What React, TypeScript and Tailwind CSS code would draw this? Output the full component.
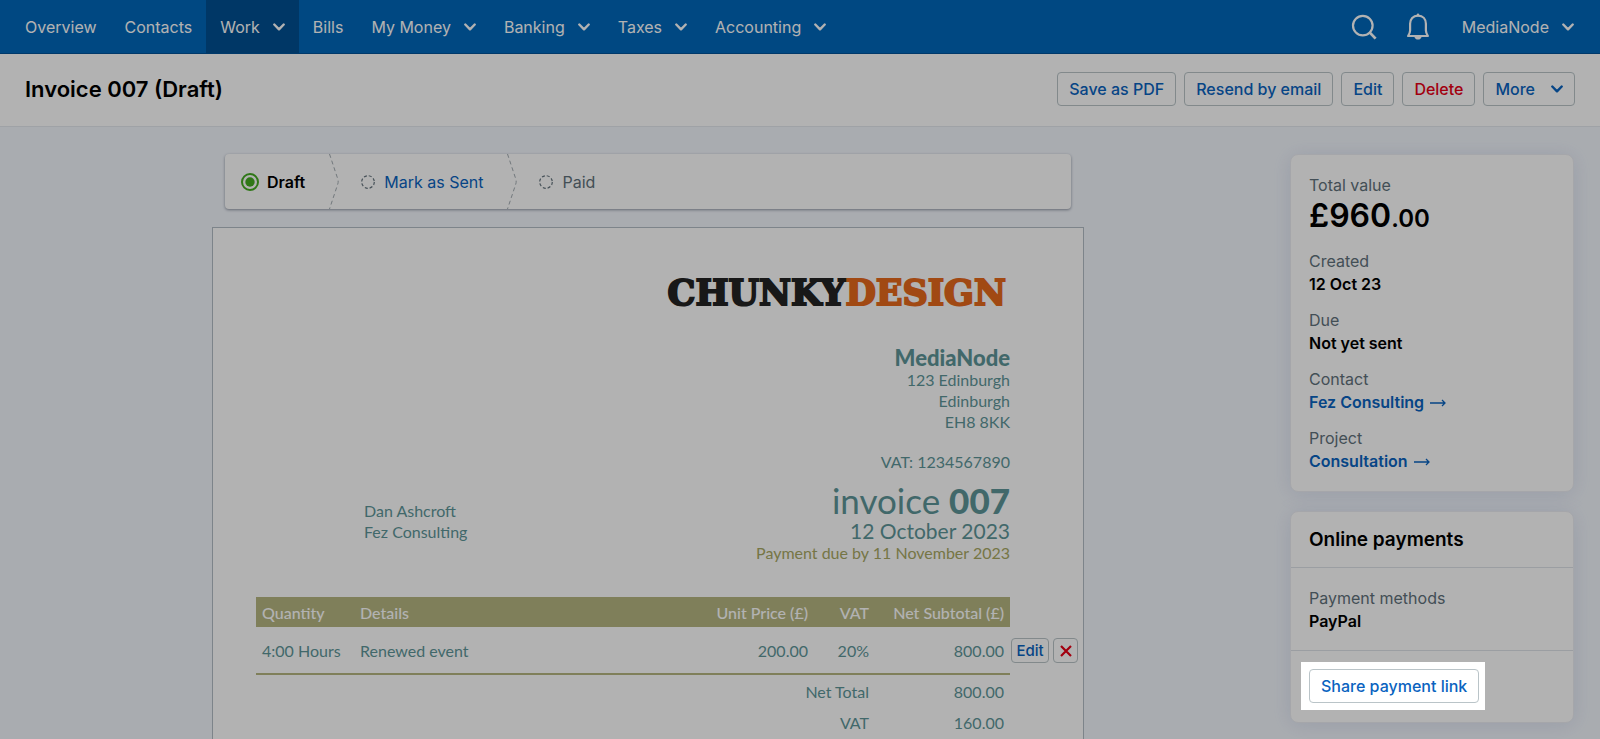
import { ReactNode } from 'react';

interface NavItem {
  label: string;
  hasMenu?: boolean;
  active?: boolean;
}

const navItems: NavItem[] = [
  { label: 'Overview' },
  { label: 'Contacts' },
  { label: 'Work', hasMenu: true, active: true },
  { label: 'Bills' },
  { label: 'My Money', hasMenu: true },
  { label: 'Banking', hasMenu: true },
  { label: 'Taxes', hasMenu: true },
  { label: 'Accounting', hasMenu: true },
];

function Chevron() {
  return (
    <svg className="h-2 w-3" viewBox="0 0 12 8" fill="none" stroke="currentColor" strokeWidth={2.4}>
      <path strokeLinecap="round" strokeLinejoin="round" d="M1.3 1.5L6 6.3l4.7-4.8" />
    </svg>
  );
}

function SearchIcon() {
  return (
    <svg className="h-7 w-7" viewBox="0 0 28 28" fill="none" stroke="currentColor" strokeWidth={2.2}>
      <circle cx="12.8" cy="12.6" r="9.8" />
      <path strokeWidth={2.8} d="M19.6 19.4l6 6.2" />
    </svg>
  );
}

function BellIcon() {
  return (
    <svg className="h-7 w-7" viewBox="0 0 28 28" fill="none" stroke="currentColor" strokeWidth={2.2}>
      <path
        strokeLinejoin="round"
        d="M14 2.6c-5 0-7.9 3.4-7.9 8.2v6.6c0 2-.9 3.8-2 5.6h19.8c-1.1-1.8-2-3.6-2-5.6v-6.6c0-4.800-2.900-8.200-7.900-8.200z"
      />
      <path strokeWidth={2.4} strokeLinecap="round" d="M14 1.6v.6" />
      <path fill="currentColor" stroke="none" d="M10.4 24h7.2c-.6 1.7-1.900 2.600-3.600 2.600s-3-.9-3.600-2.600z" />
    </svg>
  );
}

function StepDivider() {
  return (
    <svg className="h-[55px] w-[10px]" viewBox="0 0 10 55" fill="none" stroke="#a3acb2" strokeWidth={1}>
      <path strokeDasharray="4 3" d="M0.5 0L8.8 25q.8 2.5 0 5L0.5 55" />
    </svg>
  );
}

function PendingIcon() {
  return (
    <svg className="h-[14px] w-[14px]" viewBox="0 0 14 14" fill="none" stroke="#66757f" strokeWidth={1.2}>
      <circle cx="7" cy="7" r="6.3" strokeDasharray="3 1.95" />
    </svg>
  );
}

function ArrowIcon() {
  return (
    <svg className="mt-px h-2 w-4" viewBox="0 0 16 8" fill="none" stroke="currentColor" strokeWidth={1.3}>
      <path d="M0 4h15M12 1l3 3-3 3" />
    </svg>
  );
}

function Button({ children, danger }: { children: ReactNode; danger?: boolean }) {
  return (
    <button
      type="button"
      className={`flex h-[34px] items-center gap-4 whitespace-nowrap rounded border border-[#bac4c8] bg-white px-[11px] text-base font-medium ${
        danger ? 'text-[#e80016]' : 'text-[#0a63c0]'
      }`}
    >
      {children}
    </button>
  );
}

function Field({ label, children }: { label: string; children: ReactNode }) {
  return (
    <div className="leading-[23px]">
      <dt className="text-[#61717b]">{label}</dt>
      <dd className="font-semibold">{children}</dd>
    </div>
  );
}

function TopNav() {
  return (
    <nav className="flex h-[54px] items-stretch justify-between border-b border-[#005299] bg-[#0067bb] pl-[11px] pr-3 text-base text-white">
      <div className="flex">
        {navItems.map((item) => (
          <a
            key={item.label}
            href="#"
            className={`flex items-center gap-[13px] px-[14px] pt-px ${item.active ? 'bg-[#004f93]' : ''}`}
          >
            {item.label}
            {item.hasMenu && <Chevron />}
          </a>
        ))}
      </div>
      <div className="flex items-center">
        <button type="button" aria-label="Search">
          <SearchIcon />
        </button>
        <button type="button" aria-label="Notifications" className="ml-[26px]">
          <BellIcon />
        </button>
        <a href="#" className="ml-4 flex items-center gap-[13px] px-[14px] pt-px">
          MediaNode
          <Chevron />
        </a>
      </div>
    </nav>
  );
}

function StatusSteps() {
  return (
    <div className="mx-[13px] flex h-[55px] items-center rounded bg-white text-base shadow-[0_1px_3px_rgba(60,70,90,0.55)]">
      <svg className="ml-4 h-[18px] w-[18px]" viewBox="0 0 18 18" fill="none">
        <circle cx="9" cy="9" r="8" stroke="#44ab22" strokeWidth={2} />
        <circle cx="9" cy="9" r="4.7" fill="#44ab22" />
      </svg>
      <span className="ml-2 mr-6 font-semibold">Draft</span>
      <StepDivider />
      <span className="ml-[22px]">
        <PendingIcon />
      </span>
      <button type="button" className="ml-[9px] mr-6 text-[#0a63c0]">
        Mark as Sent
      </button>
      <StepDivider />
      <span className="ml-[22px]">
        <PendingIcon />
      </span>
      <span className="ml-[9px] text-[#61717b]">Paid</span>
    </div>
  );
}

function InvoicePaper() {
  return (
    <article className="mt-[18px] flex-1 border border-b-0 border-[#b4bec6] bg-white pl-[43px] pr-[5px] pt-[45px] font-[Lato,sans-serif] text-base leading-[21px] text-[#5e9699]">
      <div className="pr-[68px] text-right">
        <div className="pr-1 font-['DejaVu_Serif',serif] text-[35px] font-bold leading-10 text-[#232323] [-webkit-text-stroke:2px]">
          CHUNKY<span className="text-[#e7691c]">DESIGN</span>
        </div>
        <div className="mt-[34px] text-[22px] font-black leading-[22px]">MediaNode</div>
        <div>123 Edinburgh</div>
        <div>Edinburgh</div>
        <div>EH8 8KK</div>
        <div className="mt-[19px]">VAT: 1234567890</div>
      </div>
      <div className="mt-2 flex items-end justify-between pl-[108px] pr-[68px]">
        <div className="mb-[21px]">
          <div>Dan Ashcroft</div>
          <div>Fez Consulting</div>
        </div>
        <div className="text-right">
          <h2 className="text-[35px] leading-10">
            invoice <span className="font-black">007</span>
          </h2>
          <div className="text-[21px] leading-[22px]">12 October 2023</div>
          <div className="text-[#a9a964]">Payment due by 11 November 2023</div>
        </div>
      </div>

      <table className="mt-[34px] w-full table-fixed border-collapse text-right">
        <colgroup>
          <col className="w-[98px]" />
          <col />
          <col className="w-[120px]" />
          <col className="w-[61px]" />
          <col className="w-[135px]" />
          <col className="w-[68px]" />
        </colgroup>
        <thead>
          <tr className="h-[30px] whitespace-nowrap text-white">
            <th className="bg-[#b7b782] px-[6px] text-left font-medium">Quantity</th>
            <th className="bg-[#b7b782] px-[6px] text-left font-medium">Details</th>
            <th className="bg-[#b7b782] px-[6px] font-medium">Unit Price (£)</th>
            <th className="bg-[#b7b782] px-[6px] font-medium">VAT</th>
            <th className="bg-[#b7b782] px-[6px] font-medium">Net Subtotal (£)</th>
            <td />
          </tr>
        </thead>
        <tbody>
          <tr className="h-[47px] whitespace-nowrap">
            <td className="border-b-2 border-[#b7b782] px-[6px] text-left">4:00 Hours</td>
            <td className="border-b-2 border-[#b7b782] px-[6px] text-left">Renewed event</td>
            <td className="border-b-2 border-[#b7b782] px-[6px]">200.00</td>
            <td className="border-b-2 border-[#b7b782] px-[6px]">20%</td>
            <td className="border-b-2 border-[#b7b782] px-[6px]">800.00</td>
            <td>
              <div className="flex gap-1 pl-px font-[Inter,sans-serif]">
                <button
                  type="button"
                  className="h-[25px] w-[38px] rounded border border-[#bac4c8] text-[15px] font-medium text-[#0a63c0]"
                >
                  Edit
                </button>
                <button
                  type="button"
                  aria-label="Remove line"
                  className="flex h-[25px] w-[25px] items-center justify-center rounded border border-[#bac4c8] text-[#e80016]"
                >
                  <svg className="h-3 w-3" viewBox="0 0 12 12" stroke="currentColor" strokeWidth={2.2}>
                    <path d="M1 1l10 10M11 1L1 11" />
                  </svg>
                </button>
              </div>
            </td>
          </tr>
          <tr className="h-[33px]">
            <td colSpan={4} className="px-[6px]">Net Total</td>
            <td className="px-[6px]">800.00</td>
            <td />
          </tr>
          <tr className="h-[31px]">
            <td colSpan={4} className="px-[6px]">VAT</td>
            <td className="px-[6px]">160.00</td>
            <td />
          </tr>
        </tbody>
      </table>
    </article>
  );
}

function Sidebar() {
  return (
    <aside className="flex w-[284px] shrink-0 flex-col gap-[19px] pb-4 text-base">
      <dl className="flex flex-col gap-[13px] rounded-lg border border-[#eceef4] bg-white px-[18px] pb-[18px] pt-[19px] shadow-[0_2px_20px_rgba(100,120,180,0.16)]">
        <div className="pb-[2px]">
          <dt className="leading-[23px] text-[#61717b]">Total value</dt>
          <dd className="text-[32px] font-semibold leading-[37px]">
            £960<span className="text-2xl">.00</span>
          </dd>
        </div>
        <Field label="Created">12 Oct 23</Field>
        <Field label="Due">Not yet sent</Field>
        <Field label="Contact">
          <a href="#" className="flex items-center gap-[6px] text-[#0a63c0]">
            Fez Consulting
            <ArrowIcon />
          </a>
        </Field>
        <Field label="Project">
          <a href="#" className="flex items-center gap-[6px] text-[#0a63c0]">
            Consultation
            <ArrowIcon />
          </a>
        </Field>
      </dl>

      <section className="rounded-lg border border-[#eceef4] bg-white shadow-[0_2px_20px_rgba(100,120,180,0.16)]">
        <h2 className="px-[18px] py-[14px] text-[19px] font-semibold leading-[27px]">Online payments</h2>
        <dl className="border-y border-[#dfe2e8] px-[18px] pb-[17px] pt-[19px]">
          <Field label="Payment methods">PayPal</Field>
        </dl>
        <div className="flex px-[10px] pb-3 pt-[11px]">
          {/* Spotlight: the spread shadow dims everything around this box */}
          <div className="relative z-10 bg-white py-[7px] pl-2 pr-[6px] shadow-[0_0_0_3000px_rgba(0,0,0,0.3)]">
            <Button>Share payment link</Button>
          </div>
        </div>
      </section>
    </aside>
  );
}

export default function App() {
  return (
    <div className="flex min-h-screen flex-col overflow-hidden bg-[#f3f7fd] font-[Inter,sans-serif] text-black">
      <TopNav />
      <header className="flex h-[73px] items-center justify-between border-b border-[#e4e8ee] bg-white px-[25px] pb-[2px]">
        <h1 className="text-[22px] font-semibold">Invoice 007 (Draft)</h1>
        <div className="flex gap-2">
          <Button>Save as PDF</Button>
          <Button>Resend by email</Button>
          <Button>Edit</Button>
          <Button danger>Delete</Button>
          <Button>
            More
            <Chevron />
          </Button>
        </div>
      </header>
      <main className="flex flex-1 gap-5 px-[26px] pt-[27px]">
        <div className="flex flex-1 justify-center">
          <div className="flex w-full max-w-[872px] flex-col">
            <StatusSteps />
            <InvoicePaper />
          </div>
        </div>
        <Sidebar />
      </main>
    </div>
  );
}
